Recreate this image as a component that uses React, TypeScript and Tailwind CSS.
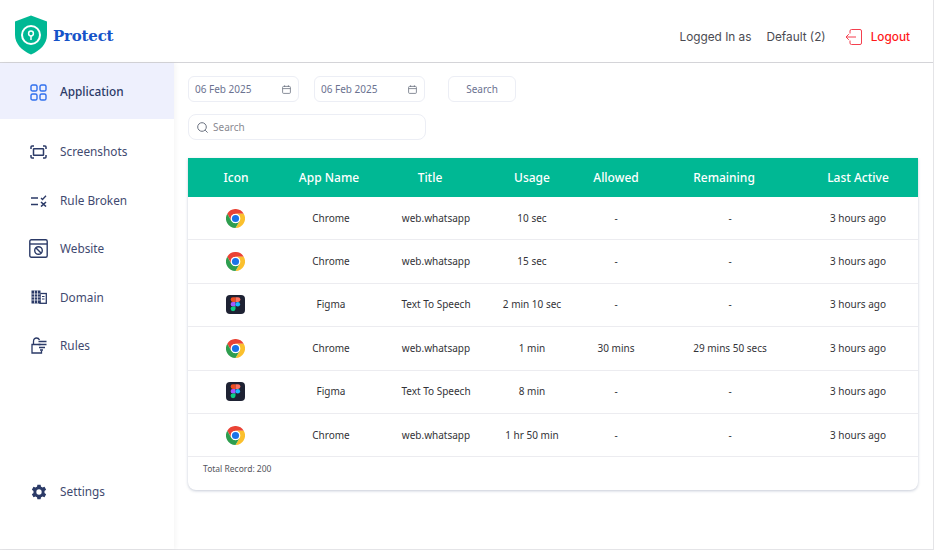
import React from "react";

const navy = "#2b3a67";

function Shield() {
  return (
    <svg width="34" height="40" viewBox="0 0 34 40" className="shrink-0">
      <path d="M17 0.5 L33 6.5 V20 C33 29 26 35.5 17 39.5 C8 35.5 1 29 1 20 V6.5 Z" fill="#00b894" />
      <circle cx="17" cy="20" r="9" fill="none" stroke="#fff" strokeWidth="2" />
      <circle cx="17" cy="18.5" r="2.4" fill="none" stroke="#fff" strokeWidth="1.5" />
      <path d="M17 21 V25" stroke="#fff" strokeWidth="1.5" />
    </svg>
  );
}

function IconApps() {
  return (
    <svg width="17" height="17" viewBox="0 0 17 17" fill="none" stroke="#2f6fed" strokeWidth="1.4" className="shrink-0">
      <rect x="1" y="1" width="6" height="6" rx="1.6" />
      <rect x="10" y="1" width="6" height="6" rx="1.6" />
      <rect x="1" y="10" width="6" height="6" rx="1.6" />
      <rect x="10" y="10" width="6" height="6" rx="1.6" />
    </svg>
  );
}
function IconShots() {
  return (
    <svg width="17" height="14" viewBox="0 0 17 14" fill="none" stroke={navy} strokeWidth="1.5" className="shrink-0">
      <path d="M1 4 V2 Q1 1 2 1 H4 M13 1 H15 Q16 1 16 2 V4 M16 10 V12 Q16 13 15 13 H13 M4 13 H2 Q1 13 1 12 V10" />
      <rect x="3.5" y="3.8" width="10" height="6.4" rx="0.5" />
    </svg>
  );
}
function IconRule() {
  return (
    <svg width="16" height="12" viewBox="0 0 16 12" fill="none" stroke={navy} strokeWidth="1.6" className="shrink-0">
      <path d="M0 3 H7 M0 9.5 H7" />
      <path d="M10 3 L11.5 4.5 L15 0.8" strokeWidth="1.3" />
      <path d="M10 7 L15 11.5 M15 7 L10 11.5" />
    </svg>
  );
}
function IconWebsite() {
  return (
    <svg width="19" height="19" viewBox="0 0 19 19" fill="none" stroke={navy} strokeWidth="1.4" className="shrink-0">
      <rect x="0.8" y="0.8" width="17.4" height="17.4" rx="1.5" />
      <path d="M1 5 H18" />
      <circle cx="9.5" cy="11.5" r="3.8" />
      <path d="M7 9 L12 14" />
    </svg>
  );
}
function IconDomain() {
  return (
    <svg width="16" height="14" viewBox="0 0 16 14" fill="none" className="shrink-0">
      <rect x="0.5" y="0.5" width="9" height="13" fill={navy} />
      <rect x="9" y="3.5" width="6.3" height="9.8" stroke={navy} strokeWidth="1.3" />
      <path d="M3.5 0.5 V13.5 M6.5 0.5 V13.5 M0.5 4 H9.5 M0.5 7 H9.5 M0.5 10 H9.5" stroke="#fff" strokeWidth="0.7" />
      <path d="M11 6.5 H13.5 M11 9 H13.5" stroke={navy} strokeWidth="1.2" />
    </svg>
  );
}
function IconRules() {
  return (
    <svg width="16" height="17" viewBox="0 0 16 17" fill="none" stroke={navy} strokeWidth="1.3" className="shrink-0">
      <path d="M2.5 7.5 V4.5 C2.5 2 4 1 5.5 1 C7 1 8 1.8 8.5 3" />
      <path d="M9.5 7.5 H1 V16 H10.5 V13.5" />
      <path d="M7.5 4.5 H15.5 M7.5 7.5 H15.5 M8 10.5 H14 M9 13 H12" />
    </svg>
  );
}
function IconGear() {
  return (
    <svg width="16" height="16" viewBox="0 0 24 24" fill={navy} className="shrink-0">
      <path
        fillRule="evenodd"
        d="M14.4 1 L15 4.2 C15.8 4.5 16.5 4.9 17.2 5.4 L20.3 4.3 L22.7 8.5 L20.2 10.6 C20.3 11 20.3 11.5 20.3 12 C20.3 12.5 20.3 13 20.2 13.4 L22.7 15.5 L20.3 19.7 L17.2 18.6 C16.5 19.1 15.8 19.5 15 19.8 L14.4 23 H9.6 L9 19.8 C8.2 19.5 7.5 19.1 6.8 18.6 L3.7 19.7 L1.3 15.5 L3.8 13.4 C3.7 13 3.7 12.5 3.7 12 C3.7 11.5 3.7 11 3.8 10.6 L1.3 8.5 L3.7 4.3 L6.8 5.4 C7.5 4.9 8.2 4.5 9 4.2 L9.6 1 Z M12 8 A4 4 0 1 0 12 16 A4 4 0 1 0 12 8 Z"
      />
    </svg>
  );
}
function IconCalendar() {
  return (
    <svg width="9" height="9" viewBox="0 0 9 9" fill="none" stroke="#6b7280" strokeWidth="0.8">
      <rect x="0.6" y="1.4" width="7.8" height="7" rx="1" />
      <path d="M0.6 3.6 H8.4 M2.6 0.3 V2 M6.4 0.3 V2" />
    </svg>
  );
}
function IconSearch() {
  return (
    <svg width="11" height="11" viewBox="0 0 11 11" fill="none" stroke="#6b7280" strokeWidth="1">
      <circle cx="5" cy="5" r="4.3" />
      <path d="M8.2 8.2 L10.6 10.6" />
    </svg>
  );
}
function IconLogout() {
  return (
    <svg width="17" height="16" viewBox="0 0 17 16" fill="none" stroke="#f43f4e" strokeWidth="1">
      <path d="M5 4.5 V2 Q5 0.5 6.5 0.5 H15 Q16.5 0.5 16.5 2 V14 Q16.5 15.5 15 15.5 H6.5 Q5 15.5 5 14 V11.5" />
      <path d="M11 8 H1 M3.8 5.2 L1 8 L3.8 10.8" />
    </svg>
  );
}

function Chrome() {
  return (
    <svg width="19" height="19" viewBox="0 0 48 48">
      <path d="M3.2 12 A24 24 0 0 1 44.8 12 H24 A12 12 0 0 0 13.6 30 Z" fill="#ea4335" />
      <path d="M44.8 12 A24 24 0 0 1 24 48 L34.4 30 A12 12 0 0 0 24 12 Z" fill="#fbc02d" />
      <path d="M24 48 A24 24 0 0 1 3.2 12 L13.6 30 A12 12 0 0 0 34.4 30 Z" fill="#2e9e4f" />
      <circle cx="24" cy="24" r="11.5" fill="#fff" />
      <circle cx="24" cy="24" r="9" fill="#1a73e8" />
    </svg>
  );
}
function Figma() {
  return (
    <svg width="19" height="19" viewBox="0 0 19 19">
      <rect width="19" height="19" rx="4" fill="#1e2233" />
      <path d="M4.6 4.6 A2.3 2.3 0 0 1 6.9 2.3 H9.5 V6.9 H6.9 A2.3 2.3 0 0 1 4.6 4.6 Z" fill="#f24e1e" />
      <path d="M9.5 2.3 H12.1 A2.3 2.3 0 0 1 12.1 6.9 H9.5 Z" fill="#ff7262" />
      <path d="M4.6 9.2 A2.3 2.3 0 0 1 6.9 6.9 H9.5 V11.5 H6.9 A2.3 2.3 0 0 1 4.6 9.2 Z" fill="#a259ff" />
      <circle cx="11.8" cy="9.2" r="2.3" fill="#1abcfe" />
      <path d="M4.6 13.8 A2.3 2.3 0 0 1 6.9 11.5 H9.5 V13.8 A2.45 2.45 0 0 1 4.6 13.8 Z" fill="#0acf83" />
    </svg>
  );
}

const nav = [
  { label: "Screenshots", icon: <IconShots /> },
  { label: "Rule Broken", icon: <IconRule /> },
  { label: "Website", icon: <IconWebsite /> },
  { label: "Domain", icon: <IconDomain /> },
  { label: "Rules", icon: <IconRules /> },
];

const headers = ["Icon", "App Name", "Title", "Usage", "Allowed", "Remaining", "Last Active"];

const rows = [
  { app: "Chrome", title: "web.whatsapp", usage: "10 sec", allowed: "-", remaining: "-" },
  { app: "Chrome", title: "web.whatsapp", usage: "15 sec", allowed: "-", remaining: "-" },
  { app: "Figma", title: "Text To Speech", usage: "2 min 10 sec", allowed: "-", remaining: "-" },
  { app: "Chrome", title: "web.whatsapp", usage: "1 min", allowed: "30 mins", remaining: "29 mins 50 secs" },
  { app: "Figma", title: "Text To Speech", usage: "8 min", allowed: "-", remaining: "-" },
  { app: "Chrome", title: "web.whatsapp", usage: "1 hr 50 min", allowed: "-", remaining: "-" },
];

function DateField() {
  return (
    <div className="w-[111px] h-[26px] rounded-md border border-[#eceef5] bg-white flex items-center justify-between pl-[6px] pr-[7px] text-[10px] text-[#6b7290]">
      <span>06 Feb 2025</span>
      <IconCalendar />
    </div>
  );
}

export default function App() {
  return (
    <div className="w-[936px] h-[550px] bg-white overflow-hidden font-['Noto_Sans','Open_Sans',sans-serif]">
      <div className="w-[934px] h-[550px] bg-white border-r border-b border-[#e4e4e7] flex flex-col">
        <header className="h-[63px] shrink-0 border-b border-[#d4d4d8] flex items-center justify-between pl-[14px] pr-[23px] pt-[8px] font-['Inter',sans-serif]">
          <div className="flex items-center gap-[5px]">
            <Shield />
            <span className="font-['DejaVu_Serif',serif] font-bold text-[15px] tracking-[-0.2px] text-[#1553c9] pt-[2px]">Protect</span>
          </div>
          <div className="flex items-center text-[11.8px] text-[#4b4b52] pt-[3px]">
            <span className="pt-[3px]">Logged In as</span>
            <span className="ml-[15px] pt-[3px]">Default (2)</span>
            <span className="ml-[19px]"><IconLogout /></span>
            <span className="ml-[9px] pt-[3px] font-medium text-[#ff1a1a]">Logout</span>
          </div>
        </header>
        <div className="flex flex-1 min-h-0">
          <aside className="w-[174px] shrink-0 flex flex-col shadow-[2px_0_4px_rgba(0,0,0,0.04)] text-[11.8px] text-[#3f4a70]">
            <div className="h-[56px] bg-[#eef0fd] flex items-center pl-[30px] pt-[2px] gap-[13px] font-medium text-[#2b3a67]">
              <span className="w-[17px] flex justify-center"><IconApps /></span>
              <span>Application</span>
            </div>
            <div className="pt-[9px] flex flex-col">
              {nav.map((n) => (
                <div key={n.label} className="h-[48.4px] flex items-center pl-[30px] gap-[13px]">
                  <span className="w-[17px] flex justify-center">{n.icon}</span>
                  <span>{n.label}</span>
                </div>
              ))}
            </div>
            <div className="mt-auto mb-[33px] h-[48px] flex items-center pl-[30px] gap-[13px]">
              <span className="w-[17px] flex justify-center"><IconGear /></span>
              <span>Settings</span>
            </div>
          </aside>
          <main className="flex-1 min-w-0 pl-[14px] pt-[13px] pr-[15px]">
            <div className="flex items-center">
              <DateField />
              <div className="ml-[15px]"><DateField /></div>
              <div className="ml-[23px] w-[68px] h-[26px] rounded-md border border-[#eceef5] flex items-center justify-center text-[10px] text-[#6b7290]">Search</div>
            </div>
            <div className="mt-[12px] w-[238px] h-[26px] rounded-lg border border-[#eceef5] flex items-center pl-[8px] gap-[5px] text-[10px] text-[#8a8a92]">
              <IconSearch />
              <span>Search</span>
            </div>
            <div className="mt-[18px] w-[730px] rounded-b-lg bg-white shadow-[0_1px_3px_rgba(50,70,110,0.28)]">
              <div className="h-[39px] bg-[#00b894] grid grid-cols-[96px_90px_112px_92px_76px_140px_124px] items-center text-center text-[12px] font-medium text-white">
                {headers.map((h, i) => (
                  <span key={h} className={i === 6 ? "pl-[4px]" : ""}>{h}</span>
                ))}
              </div>
              {rows.map((r, i) => (
                <div
                  key={i}
                  className="h-[43.4px] border-b border-[#ececf0] grid grid-cols-[96px_94px_116px_76px_92px_136px_120px] items-center text-center text-[10px] text-[#333338]"
                >
                  <span className="flex justify-center pr-[1px]">{r.app === "Chrome" ? <Chrome /> : <Figma />}</span>
                  <span>{r.app}</span>
                  <span>{r.title}</span>
                  <span>{r.usage}</span>
                  <span>{r.allowed}</span>
                  <span>{r.remaining}</span>
                  <span>3 hours ago</span>
                </div>
              ))}
              <div className="h-[33px] pl-[15px] pt-[6px] text-[8.5px] text-[#55555c]">Total Record: 200</div>
            </div>
          </main>
        </div>
      </div>
    </div>
  );
}
